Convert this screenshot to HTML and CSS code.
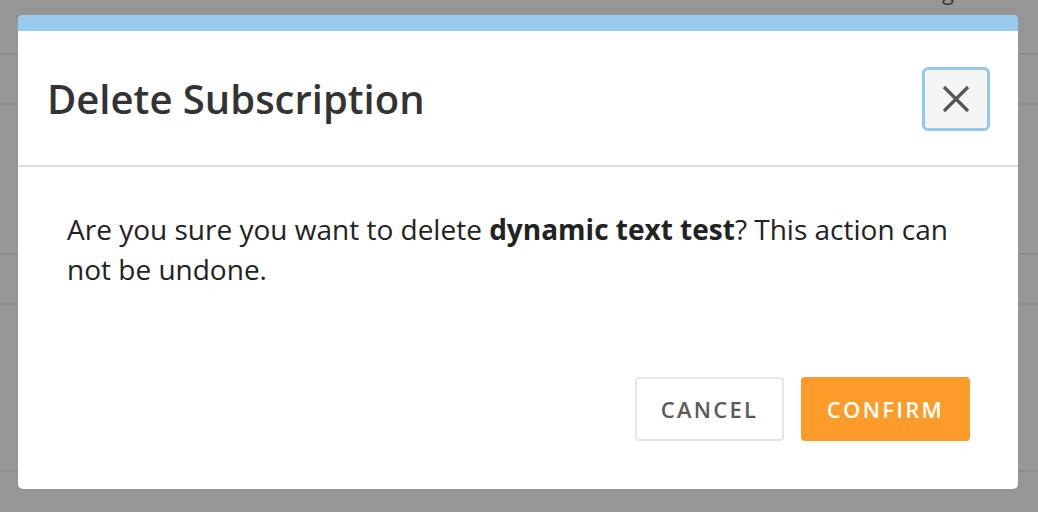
FILE: index.html
```html
<!DOCTYPE html>
<html>
<head>
<meta charset="utf-8">
<link rel="stylesheet" href="styles.css">
</head>
<body>
<div class="page">
  <div class="row r1"><span class="peek">g</span></div>
  <div class="row r2"></div>
  <div class="row r3"></div>
  <div class="row r4"></div>
  <div class="row r5"></div>
  <div class="row r6"></div>
</div>
<div class="modal">
  <div class="modal-top"></div>
  <div class="modal-header">
    <h1 class="modal-title">Delete Subscription</h1>
    <button class="close-btn" aria-label="Close">
      <svg width="28" height="28" viewBox="0 0 28 28"><path d="M2 2 L26 26 M26 2 L2 26" stroke="#555" stroke-width="3.2" stroke-linecap="butt" fill="none"/></svg>
    </button>
  </div>
  <div class="modal-body">
    <p class="msg">Are you sure you want to delete <strong>dynamic text test</strong>? This action can not be undone.</p>
  </div>
  <div class="modal-footer">
    <button class="btn btn-cancel">CANCEL</button>
    <button class="btn btn-confirm">CONFIRM</button>
  </div>
</div>
</body>
</html>
```

FILE: styles.css
```css
html, body {
  margin: 0;
  padding: 0;
}
body {
  width: 1038px;
  height: 512px;
  overflow: hidden;
  background: #969696;
  font-family: "Open Sans", "Liberation Sans", sans-serif;
  position: relative;
}
.page {
  display: flex;
  flex-direction: column;
}
.row {
  border-bottom: 2px solid #8d8d8d;
  box-sizing: border-box;
  position: relative;
}
.r1 { height: 55px; }
.r2 { height: 50px; }
.r3 { height: 150px; }
.r4 { height: 50px; }
.r5 { height: 167px; }
.r6 { height: 60px; border-bottom: none; }
.peek {
  position: absolute;
  left: 942px;
  top: -22px;
  font-size: 22px;
  color: #3a3a3a;
  line-height: 26px;
}
.modal {
  position: absolute;
  left: 18px;
  top: 15px;
  width: 1000px;
  height: 474px;
  background: #fff;
  border-radius: 5px;
  overflow: hidden;
  display: flex;
  flex-direction: column;
}
.modal-top {
  height: 16px;
  background: #99cbee;
  flex: none;
}
.modal-header {
  height: 136px;
  box-sizing: border-box;
  border-bottom: 2px solid #dcdcdc;
  display: flex;
  align-items: center;
  justify-content: space-between;
  padding: 0 28px 0 29px;
  flex: none;
}
.modal-title {
  margin: 0;
  font-size: 40px;
  font-weight: 600;
  color: #333;
  letter-spacing: 0;
}
.close-btn {
  width: 68px;
  height: 64px;
  box-sizing: border-box;
  border: 3px solid #94c8ee;
  border-radius: 6px;
  background: #f5f5f5;
  display: flex;
  align-items: center;
  justify-content: center;
  padding: 0;
  margin-top: 1px;
}
.modal-body {
  padding: 42px 49px 0 49px;
  flex: 1;
}
.msg {
  margin: 0;
  font-size: 28px;
  line-height: 40px;
  color: #222;
}
.msg strong {
  font-weight: 700;
}
.modal-footer {
  display: flex;
  justify-content: flex-end;
  gap: 17px;
  padding: 0 48px 48px 0;
}
.btn {
  height: 64px;
  box-sizing: border-box;
  border-radius: 4px;
  font-family: "Open Sans", "Liberation Sans", sans-serif;
  font-size: 22px;
  font-weight: 600;
  letter-spacing: 2.3px;
  padding: 0 0 1px 0;
  display: flex;
  align-items: center;
  justify-content: center;
}
.btn-cancel {
  width: 149px;
  background: #fff;
  border: 2px solid #e6e6e6;
  color: #5a5a5a;
}
.btn-confirm {
  width: 169px;
  background: #fd9c2a;
  border: none;
  color: #fff;
}
```
